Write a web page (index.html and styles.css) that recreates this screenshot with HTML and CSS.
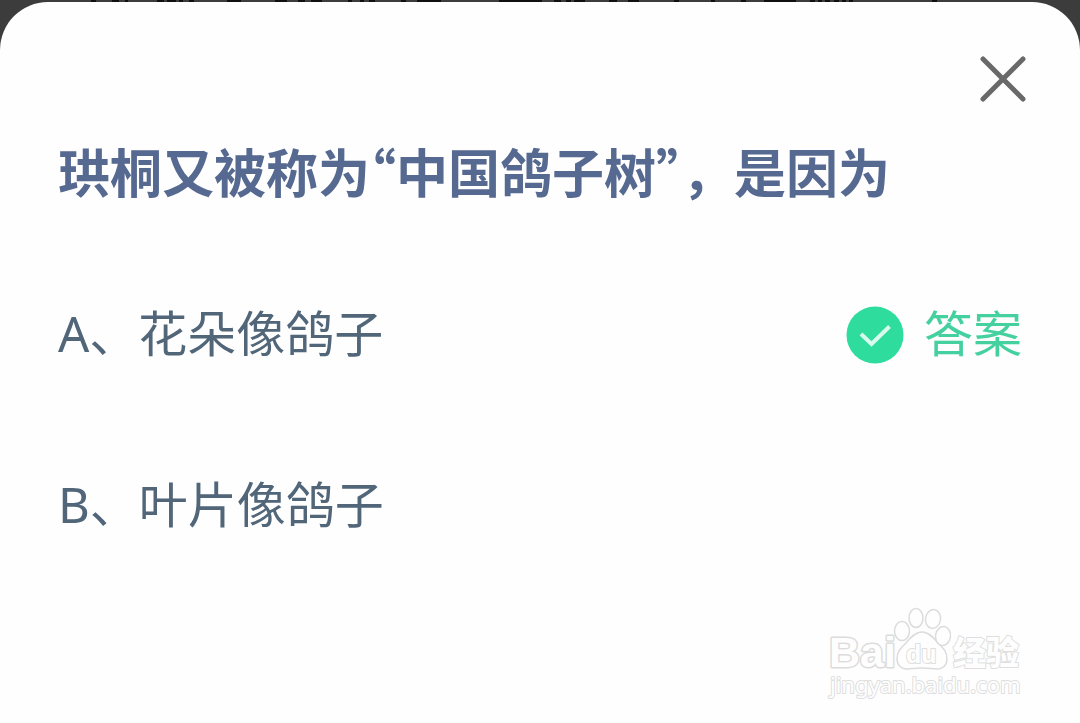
FILE: index.html
```html
<!DOCTYPE html>
<html lang="zh-CN">
<head>
<meta charset="utf-8">
<meta name="viewport" content="width=device-width, initial-scale=1">
<title>答题</title>
<link rel="stylesheet" href="styles.css">
</head>
<body class="page">
<svg class="backdrop" viewBox="0 0 1080 2" preserveAspectRatio="none" aria-hidden="true">
  <path d="M91 1H96M112 1H119M125 1H128M157 1H164M167 1H176M179 1H183M189 1H194M227 1H241M275 1H287M298 1H305M311 1H322M348 1H352M360 1H364M369 1H375M401 1H406M417 1H441M499 1H542M554 1H561M566 1H571M574 1H585M609 1H617M628 1H639M674 1H679M711 1H715M741 1H746M764 1H796M810 1H815M818 1H822M825 1H830M834 1H839M842 1H846M849 1H853M932 1H937"/>
</svg>
<main class="sheet">
  <header class="top">
    <button class="close" type="button" aria-label="关闭">
      <svg class="close-icon" viewBox="0 0 46 46" aria-hidden="true"><path d="M3 3L43 43M43 3L3 43"/></svg>
    </button>
  </header>
  <h1 class="question">珙桐又被称为<span class="quoted">“中国鸽子树”</span>，是因为</h1>
  <ul class="options">
    <li class="option">
      <span class="option-text">A、花朵像鸽子</span>
      <span class="answer">
        <svg class="check" viewBox="0 0 58 58" aria-hidden="true"><circle cx="29" cy="29" r="28.500"/><path d="M15 28L25.500 38L43.500 20.500"/></svg>
        <span>答案</span>
      </span>
    </li>
    <li class="option">
      <span class="option-text">B、叶片像鸽子</span>
    </li>
  </ul>
  <footer class="brand">
    <svg class="watermark" viewBox="0 0 200 100" role="img" aria-label="Baidu 经验 jingyan.baidu.com">
      <g class="outline">
        <text class="logo" x="7" y="67">Bai</text>
        <path d="M100 32C93 32 88 38 84 43C79 48 75 51 75 59C75 65 79 69 85 69C90 69 93 68 100 68C107 68 110 69 115 69C121 69 125 65 125 59C125 51 121 48 116 43C112 38 107 32 100 32Z"/>
        <ellipse cx="80" cy="31" rx="7.500" ry="9.500"/>
        <ellipse cx="94" cy="18" rx="7" ry="9.500"/>
        <ellipse cx="111" cy="19" rx="7.500" ry="9.500" transform="rotate(10 111 19)"/>
        <ellipse cx="121" cy="36" rx="7.500" ry="9.500" transform="rotate(8 121 36)"/>
      </g>
      <g class="lettering">
        <text class="du" x="84" y="63">du</text>
        <text class="product" x="131" y="65">经验</text>
        <text class="url" x="8" y="93">jingyan.baidu.com</text>
      </g>
    </svg>
  </footer>
</main>
</body>
</html>
```
FILE: styles.css
```css
* { box-sizing: border-box; }

.page {
  margin: 0;
  min-height: 100vh;
  display: flex;
  flex-direction: column;
  background: #3c3c3c;
  font-family: "Noto Sans", "Noto Sans CJK SC", sans-serif;
}

.backdrop {
  display: block;
  width: 100%;
  height: 2px;
  fill: none;
  stroke: #101010;
  stroke-width: 2;
}

.sheet {
  flex: 1;
  display: flex;
  flex-direction: column;
  padding: 54px 58px 23px;
  background: #fefefe;
  border-radius: 48px 48px 0 0;
}

.top { display: flex; justify-content: flex-end; }

.close {
  display: block;
  margin-right: -6px;
  padding: 0;
  border: 0;
  background: none;
  cursor: pointer;
}

.close-icon {
  display: block;
  width: 50px;
  height: 46px;
  fill: none;
  stroke: #696969;
  stroke-width: 5;
  stroke-linecap: round;
}

.question {
  margin: 33px 0 0;
  font-family: "Noto Sans CJK SC", sans-serif;
  font-size: 52px;
  line-height: 72px;
  font-weight: 700;
  color: #566990;
}

.quoted { font-feature-settings: "halt"; }

.options {
  list-style: none;
  margin: 90px 0 0;
  padding: 0;
  display: grid;
  gap: 99px;
}

.option {
  display: flex;
  align-items: center;
  justify-content: space-between;
  font-size: 49px;
  line-height: 72px;
  color: #52667a;
}

.answer {
  display: flex;
  align-items: center;
  gap: 20px;
  color: #45d0a0;
}

.check {
  width: 58px;
  height: 58px;
  margin-top: 4px;
  fill: #2edc9e;
}

.check path {
  fill: none;
  stroke: #d9fbee;
  stroke-width: 4;
}

.brand {
  display: flex;
  justify-content: flex-end;
  margin-top: auto;
}

.watermark {
  display: block;
  width: 200px;
  height: 100px;
}

.outline {
  fill: #fefefe;
  stroke: #dcdcdc;
  stroke-width: 1.5;
  stroke-linejoin: round;
}

.lettering {
  fill: #fefefe;
  stroke: #dedede;
  stroke-width: 2;
  stroke-linejoin: round;
  paint-order: stroke;
}

.logo {
  font: 700 43px "Liberation Sans", sans-serif;
  stroke-width: 3;
  paint-order: stroke;
}
.du { font: 700 25px "Liberation Sans", sans-serif; }
.product { font: 900 33px "Noto Sans CJK SC", sans-serif; }
.url { font: 400 22px "Noto Sans", sans-serif; }
```
